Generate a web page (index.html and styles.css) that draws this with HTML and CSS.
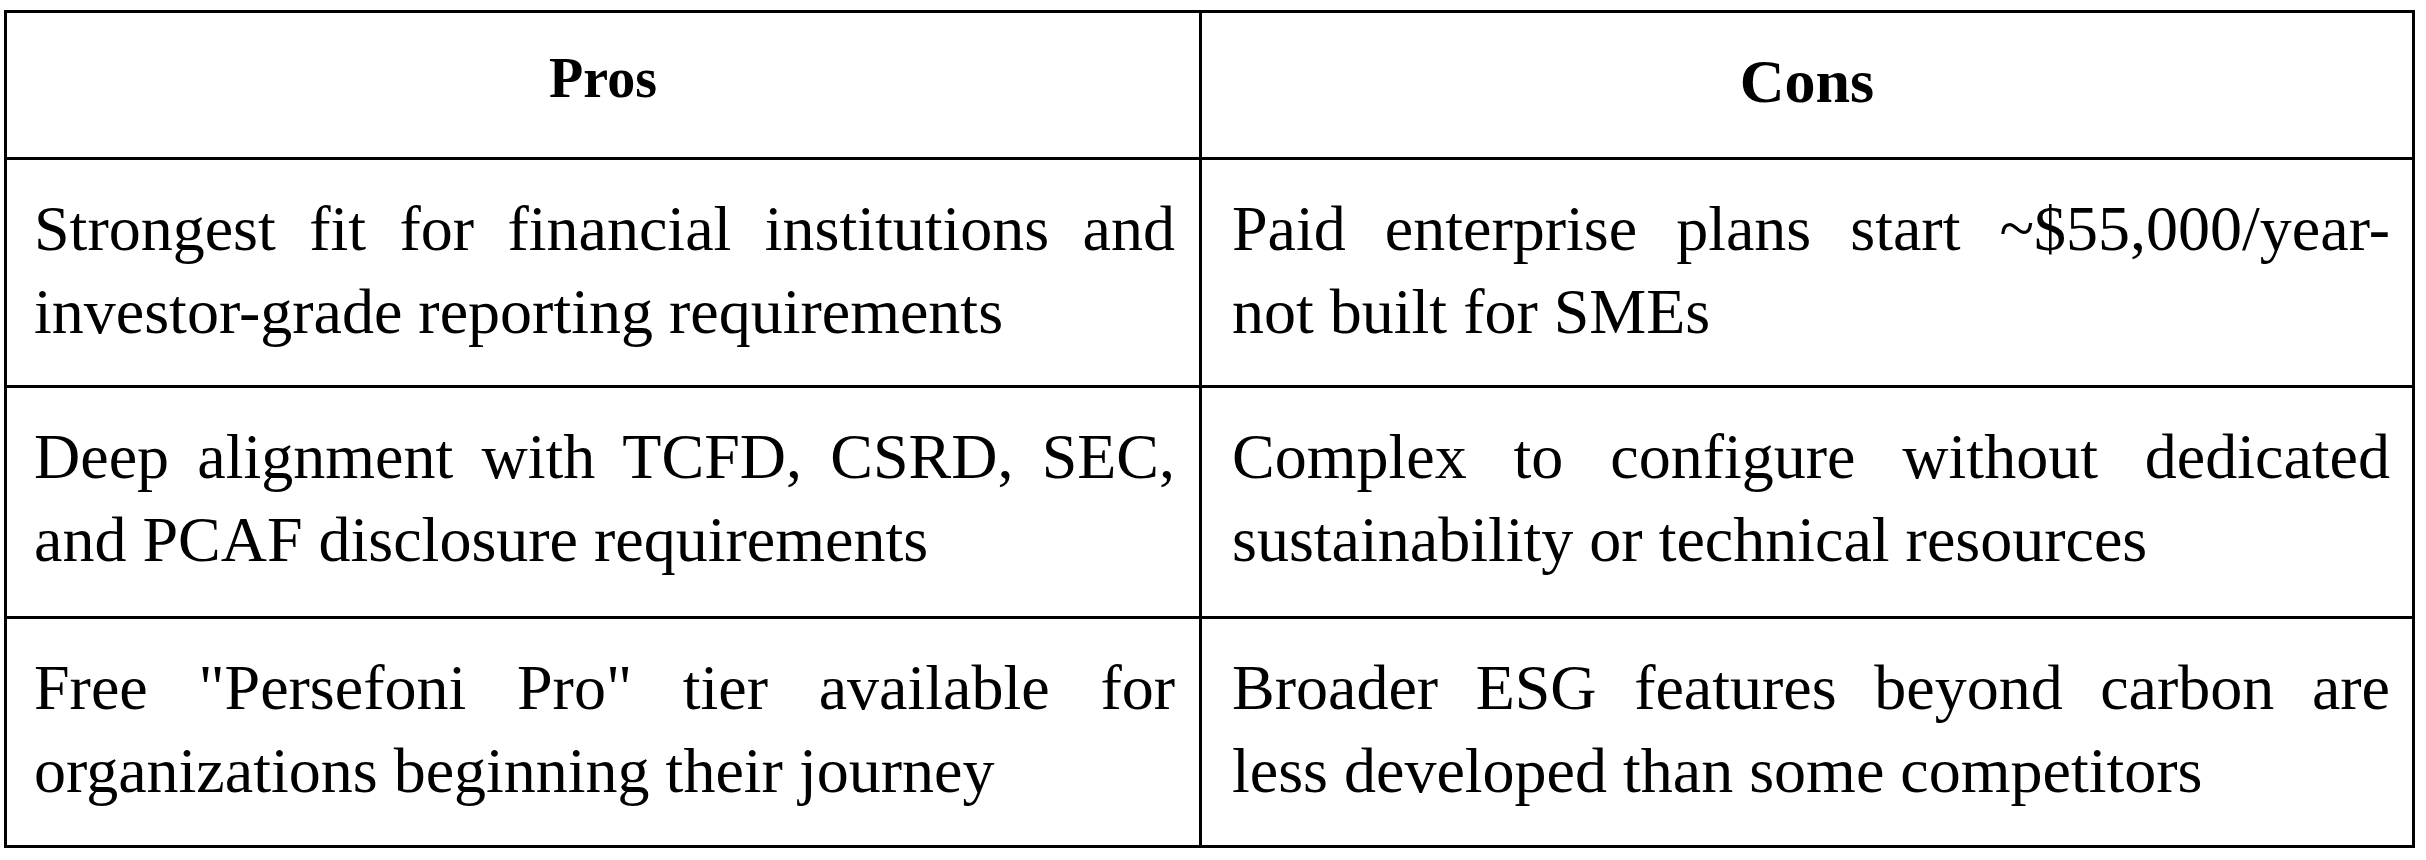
FILE: index.html
```html
<!DOCTYPE html>
<html lang="en">
<head>
<meta charset="utf-8">
<title>Pros and Cons</title>
<link rel="stylesheet" href="styles.css">
</head>
<body>
<div class="page">
  <div class="table" role="table">
    <div class="cell head left pros" role="columnheader">Pros</div>
    <div class="cell head right cons" role="columnheader">Cons</div>

    <div class="cell body left r1" role="cell">Strongest fit for financial institutions and investor-grade reporting requirements</div>
    <div class="cell body right r1" role="cell">Paid enterprise plans start ~$55,000/year- not&nbsp;built for SMEs</div>

    <div class="cell body left r2" role="cell">Deep alignment with TCFD, CSRD, SEC, and&nbsp;PCAF disclosure requirements</div>
    <div class="cell body right r2" role="cell">Complex to configure without dedicated sustainability or technical resources</div>

    <div class="cell body left r3 last" role="cell">Free "Persefoni Pro" tier available for organizations beginning their journey</div>
    <div class="cell body right r3 last" role="cell">Broader ESG features beyond carbon are less&nbsp;developed than some competitors</div>
  </div>
</div>
</body>
</html>
```
FILE: styles.css
```css
* {
  box-sizing: border-box;
}

html, body {
  margin: 0;
  padding: 0;
  background: #ffffff;
}

body {
  font-family: "Liberation Serif", "Times New Roman", serif;
  color: #000000;
}

.page {
  padding: 10px 0 0 4px;
}

.table {
  width: 2411px;
  height: 838px;
  border: 3px solid #000000;
  display: grid;
  grid-template-columns: 1195px 1210px;
  grid-template-rows: 147px 228px 231px 226px;
}

.cell {
  border-bottom: 3px solid #000000;
}

.cell.left {
  border-right: 3px solid #000000;
}

.cell.last {
  border-bottom: none;
}

.head {
  font-weight: bold;
  text-align: center;
  line-height: 1;
  padding-top: 37px;
}

.pros {
  font-size: 56px;
}

.cons {
  font-size: 62px;
}

.body {
  font-size: 64px;
  line-height: 83px;
  text-align: justify;
  padding-top: 27px;
}

.body.left {
  padding-left: 27px;
  padding-right: 24px;
}

.body.right {
  padding-left: 30px;
  padding-right: 22px;
}
```
